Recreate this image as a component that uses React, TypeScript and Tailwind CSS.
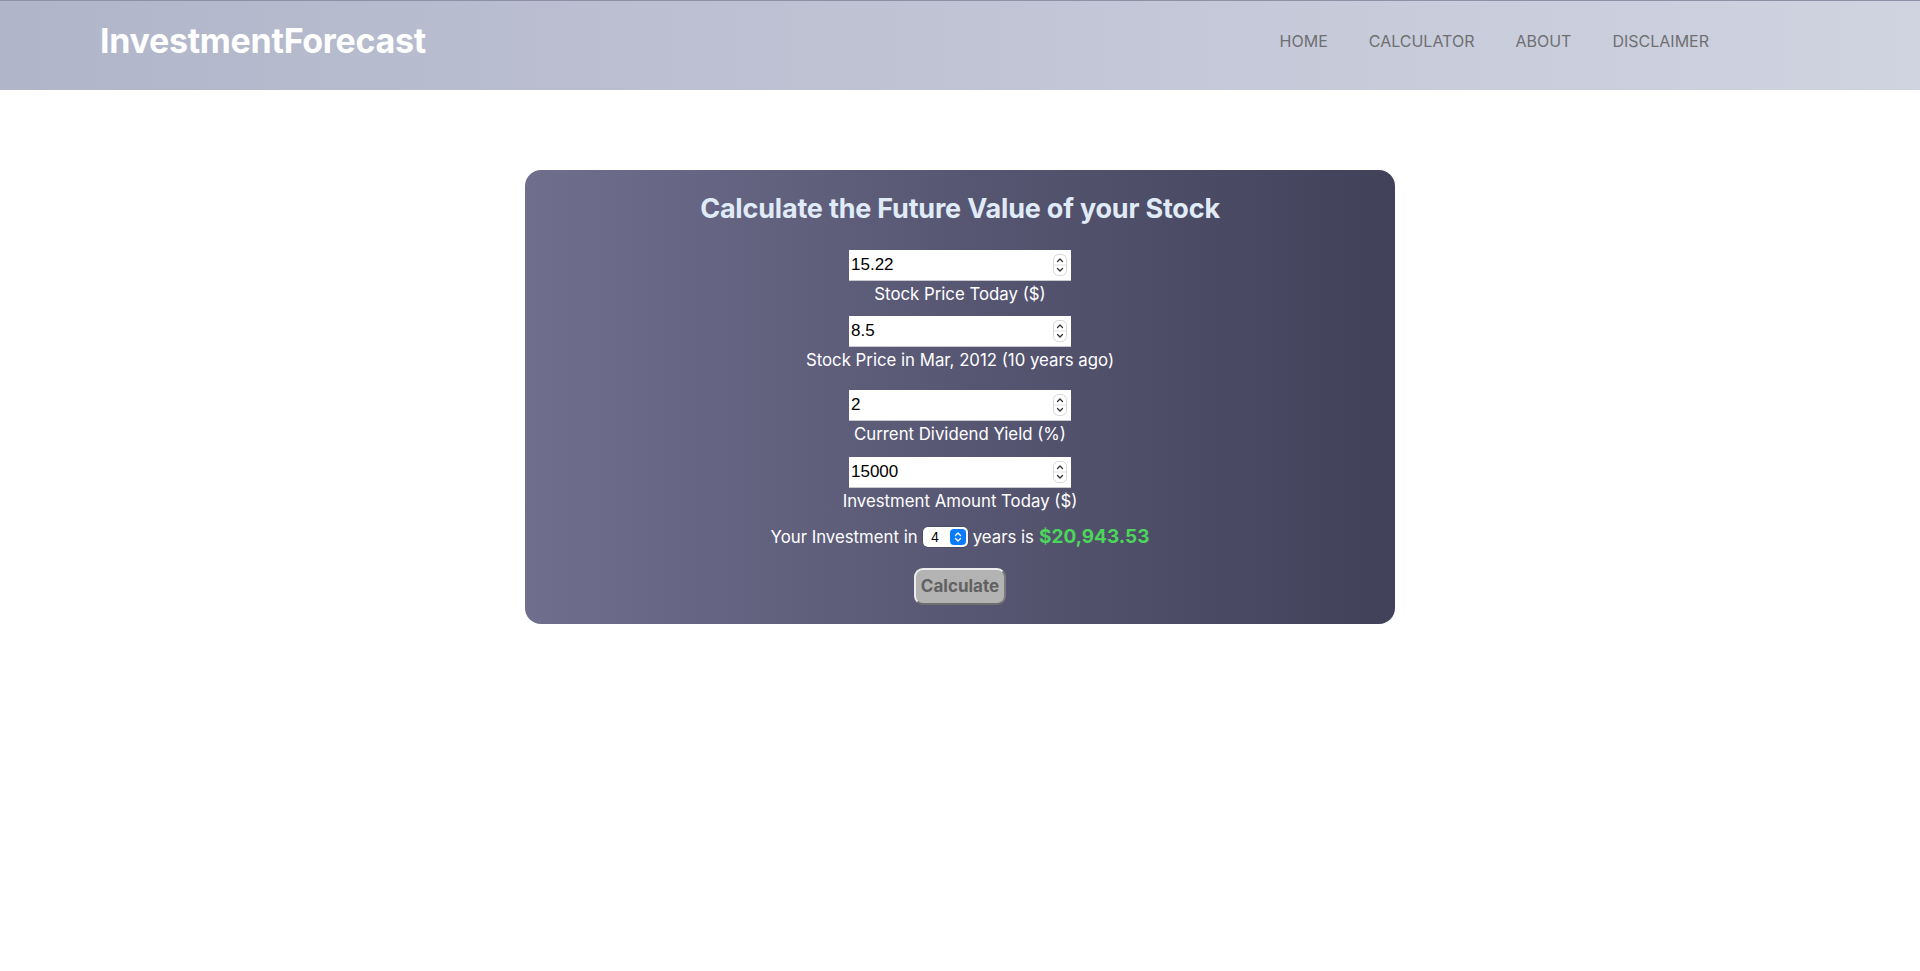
import { useState } from 'react'

// ─── Datos ────────────────────────────────────────────────────
const NAV = ['HOME', 'CALCULATOR', 'ABOUT', 'DISCLAIMER']

interface Field {
  value: string
  label: string
  gap: string
}

const FIELDS: Field[] = [
  { value: '15.22', label: 'Stock Price Today ($)', gap: 'mt-[26px]' },
  { value: '8.5', label: 'Stock Price in Mar, 2012 (10 years ago)', gap: 'mt-[10px]' },
  { value: '2', label: 'Current Dividend Yield (%)', gap: 'mt-[18px]' },
  { value: '15000', label: 'Investment Amount Today ($)', gap: 'mt-[11px]' },
]

// ─── Componente ───────────────────────────────────────────────
export default function App() {
  const [years] = useState(4)

  return (
    <div className="min-h-[971px] bg-white font-['Inter','Noto_Sans',sans-serif]">
      {/* Header */}
      <header className="h-[90px] border-t border-[#8c91a6] bg-linear-to-r from-[#b0b5c9] to-[#d0d4e1] flex items-center justify-between pl-[100px] pr-[211px]">
        <h1 className="text-white text-[34px] font-bold tracking-[-0.3px] leading-none -mt-[10px]">
          InvestmentForecast
        </h1>
        <nav className="flex gap-[41px] -mt-[10px]">
          {NAV.map((item) => (
            <a key={item} className="text-[#6f6f72] text-[16px] leading-none">
              {item}
            </a>
          ))}
        </nav>
      </header>

      {/* Card */}
      <main className="flex justify-center pt-[80px]">
        <div className="w-[870px] rounded-[16px] bg-linear-to-r from-[#6f6e8d] to-[#42415a] flex flex-col items-center pt-[24px] pb-[19px]">
          <h2 className="text-[#e0ebf8] text-[27px] font-bold leading-[30px] tracking-[-0.2px]">
            Calculate the Future Value of your Stock
          </h2>

          {FIELDS.map((f) => (
            <div key={f.label} className={`flex flex-col items-center ${f.gap}`}>
              <NumberBox value={f.value} />
              <label className="mt-[1px] text-white text-[16.8px] leading-[24px]">
                {f.label}
              </label>
            </div>
          ))}

          {/* Resultado */}
          <p className="mt-[12px] flex items-center text-white text-[16.8px] leading-[24px]">
            Your Investment in
            <YearSelect value={years} />
            years is
            <span className="ml-[5px] text-[#4bd65b] text-[19px] font-bold">
              $20,943.53
            </span>
          </p>

          <button className="mt-[19px] h-[37px] w-[92px] rounded-[9px] bg-[#b3b3b3] border-2 border-t-[#ececec] border-l-[#ececec] border-r-[#7b7b7b] border-b-[#6e6e6e] text-[#616161] text-[17px] font-bold">
            Calculate
          </button>
        </div>
      </main>
    </div>
  )
}

// ─── Sub-componentes ──────────────────────────────────────────
function NumberBox({ value }: { value: string }) {
  return (
    <div className="w-[222px] h-[31px] bg-white border-b border-[#c9c9cf] flex items-center pl-[2px] pr-[4px]">
      <span className="flex-1 text-black text-[17px] font-['Liberation_Sans',Arial,sans-serif]">
        {value}
      </span>
      <svg width="14" height="22" viewBox="0 0 14 22">
        <rect x="0.5" y="0.5" width="13" height="21" rx="5" fill="#fff" stroke="#d6d6d6" />
        <line x1="1" y1="11" x2="13" y2="11" stroke="#e2e2e2" />
        <path d="M4.5 7.5 L7 5 L9.5 7.5" fill="none" stroke="#333" strokeWidth="1.3" strokeLinecap="round" strokeLinejoin="round" />
        <path d="M4.5 14.5 L7 17 L9.5 14.5" fill="none" stroke="#333" strokeWidth="1.3" strokeLinecap="round" strokeLinejoin="round" />
      </svg>
    </div>
  )
}

function YearSelect({ value }: { value: number }) {
  return (
    <span className="mx-[5px] w-[45px] h-[20px] bg-white rounded-[5px] flex items-center justify-between pl-[8px] pr-[2px] shadow-[0_0_0_0.5px_rgba(0,0,0,0.25)]">
      <span className="text-black text-[13px] leading-none font-['Inter',sans-serif]">{value}</span>
      <span className="w-[16px] h-[16px] rounded-[4px] bg-[#0a7bff] flex items-center justify-center">
        <svg width="8" height="12" viewBox="0 0 8 12">
          <path d="M1.5 4.5 L4 2 L6.5 4.5" fill="none" stroke="#fff" strokeWidth="1.4" strokeLinecap="round" strokeLinejoin="round" />
          <path d="M1.5 7.5 L4 10 L6.5 7.5" fill="none" stroke="#fff" strokeWidth="1.4" strokeLinecap="round" strokeLinejoin="round" />
        </svg>
      </span>
    </span>
  )
}
